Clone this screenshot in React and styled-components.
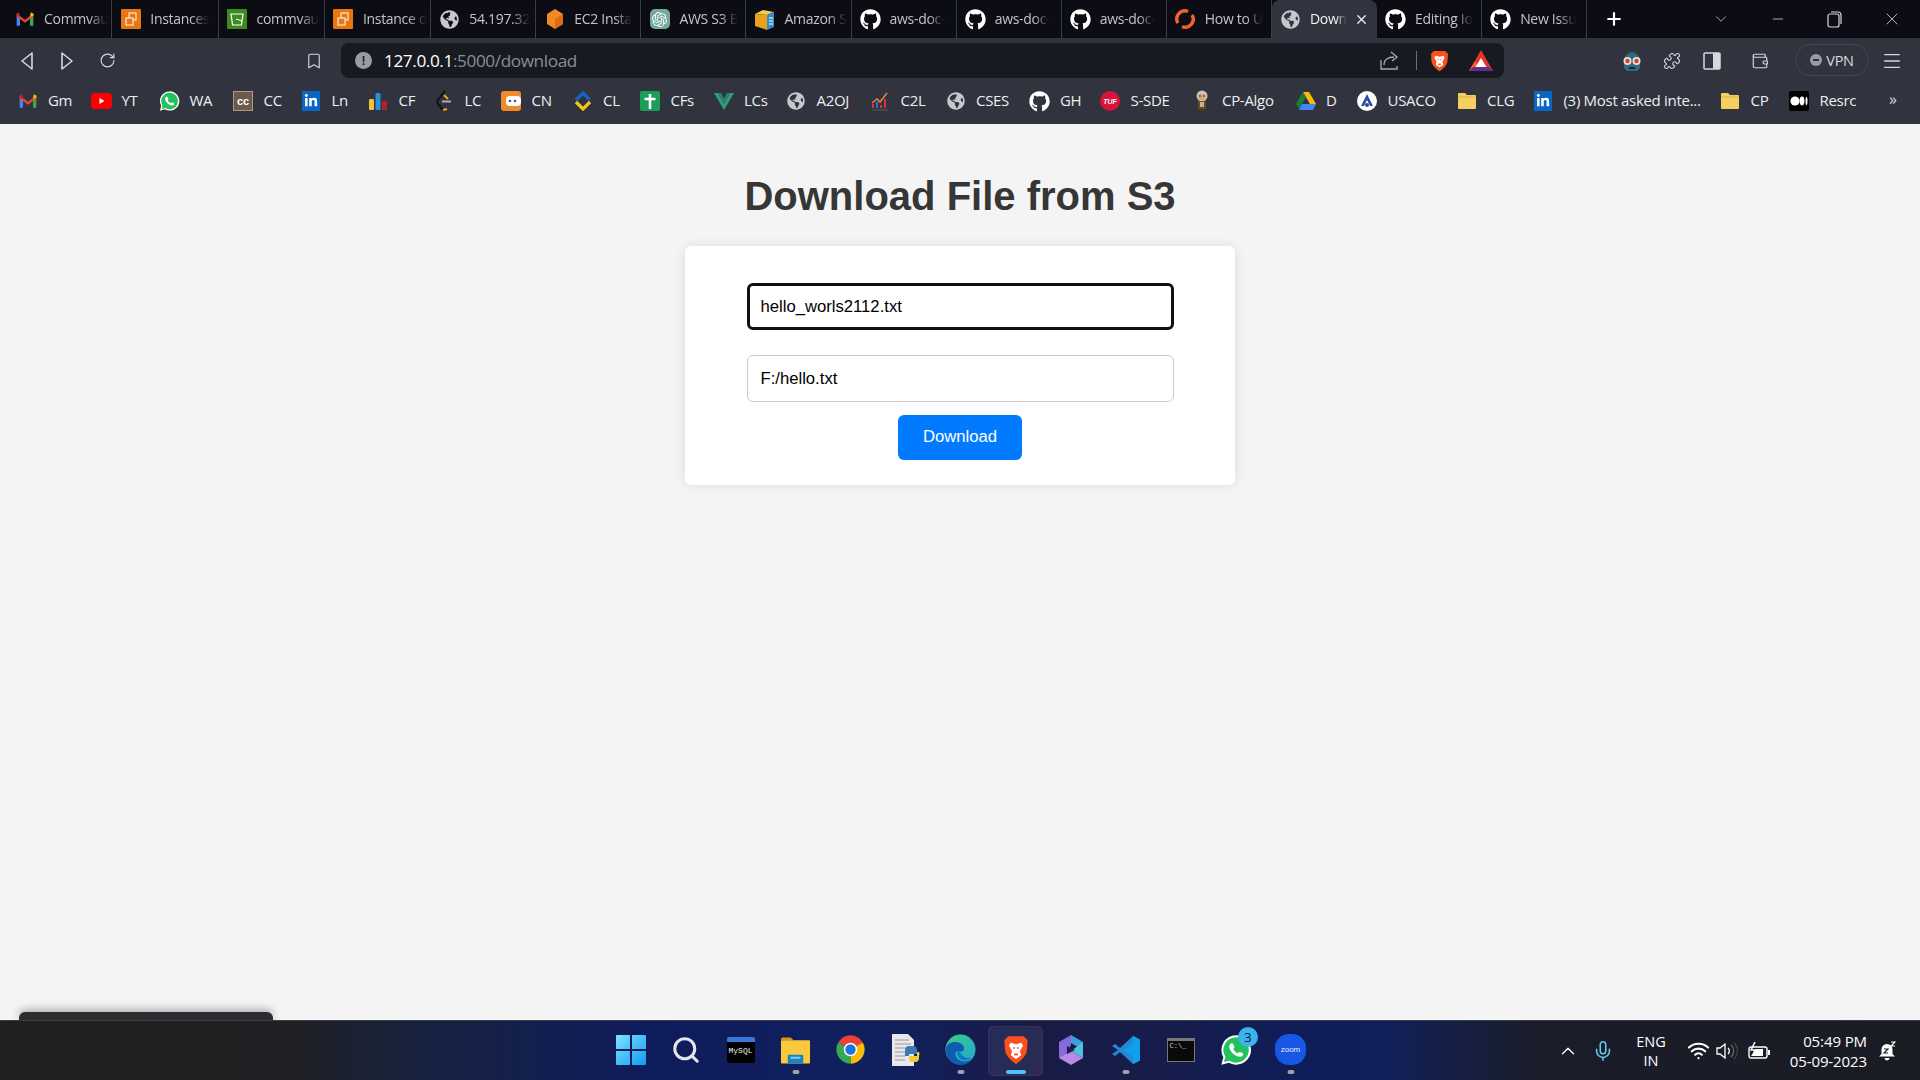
import React from 'react';
import styled, { createGlobalStyle } from 'styled-components';
import { FaGithub, FaLinkedinIn, FaGlobeAmericas } from 'react-icons/fa';
import { SiOpenai } from 'react-icons/si';
import { RotateCw, Bookmark, Puzzle, Wallet, Menu, X, Plus, Minus, ChevronDown, ChevronUp, Mic, Wifi, Search } from 'lucide-react';

const GlobalStyle = createGlobalStyle`
	html, body { margin: 0; padding: 0; height: 100%; overflow: hidden; }
	body { background: #f4f4f4; font-family: 'Liberation Sans', Arial, sans-serif; }
	#root { height: 100%; }
`;

const Screen = styled.div`
	position: relative;
	width: 1920px;
	height: 1080px;
	display: flex;
	flex-direction: column;
	overflow: hidden;
`;

/* ---------- icons ---------- */

const GmailIcon = ({ s = 20 }) => (
	<svg width={s} height={s} viewBox="0 0 24 24">
		<path d="M2 6v14h4V10z" fill="#4285f4" />
		<path d="M22 6v14h-4V10z" fill="#34a853" />
		<path d="M2 5.5 12 13l10-7.5V9L12 16.500 2 9z" fill="#ea4335" />
		<path d="M2 5.500 5 4l1 5.500L2 8z" fill="#c5221f" />
		<path d="M22 5.500 19 4l-1 5.500L22 8z" fill="#fbbc04" />
	</svg>
);
const AwsTile = ({ bg = '#e8770f' }) => (
	<svg width="20" height="20" viewBox="0 0 20 20">
		<rect width="20" height="20" rx="1" fill={bg} />
		<rect x="8" y="4" width="7" height="7" fill="none" stroke="#fff" strokeWidth="1" />
		<rect x="5" y="9" width="7" height="7" fill={bg} stroke="#fff" strokeWidth="1" />
	</svg>
);
const BucketTile = () => (
	<svg width="20" height="20" viewBox="0 0 20 20">
		<rect width="20" height="20" rx="1" fill="#3f8a1f" />
		<path d="M4 5h12l-1.600 11H5.600z" fill="none" stroke="#fff" strokeWidth="1.200" />
		<path d="M9 10l6 2" stroke="#fff" strokeWidth="1" />
	</svg>
);
const CubeIcon = () => (
	<svg width="20" height="22" viewBox="0 0 20 22">
		<path d="M10 1 18 6v10l-8 5-8-5V6z" fill="#f08a24" />
		<path d="M10 11v10l8-5V6z" fill="#e06c12" />
	</svg>
);
const GptTile = () => (
	<Tile $bg="#74aa9c" $r={5}><SiOpenai size={15} color="#fff" /></Tile>
);
const AmazonBox = () => (
	<svg width="21" height="21" viewBox="0 0 21 21">
		<path d="M1 5 9 1l11 2-7 3z" fill="#f7c948" />
		<path d="M1 5l12 1v15L1 17z" fill="#e8a21d" />
		<path d="M13 6l7-3v15l-7 3z" fill="#2f8fc9" />
		<path d="M15 9h4M15 12h4M15 15h4" stroke="#fff" strokeWidth="1.200" />
	</svg>
);
const SyncIcon = () => (
	<svg width="20" height="20" viewBox="0 0 20 20" fill="none" stroke="#f4602a" strokeWidth="3.400">
		<path d="M3 14A8 8 0 0 1 13 2.500" />
		<path d="M17 6a8 8 0 0 1-10 11.500" />
	</svg>
);
const Globe = ({ s = 19 }) => <FaGlobeAmericas size={s} color="#c6c8cd" />;
const Hub = () => <FaGithub size={21} color="#fff" />;
const YtIcon = () => (
	<svg width="21" height="16" viewBox="0 0 21 16">
		<rect width="21" height="16" rx="4" fill="#f00" />
		<path d="M8.500 5v6l5-3z" fill="#fff" />
	</svg>
);
const WaIcon = ({ s = 22 }) => (
	<svg width={s} height={s} viewBox="0 0 24 24">
		<path d="M12 1a11 11 0 0 0-9.500 16.500L1 23l5.700-1.500A11 11 0 1 0 12 1z" fill="#fff" />
		<path d="M12 2.500a9.500 9.500 0 0 0-8 14.500l-1 4 4-1a9.500 9.500 0 1 0 5-17.500z" fill="#25c15f" />
		<path d="M8.500 7c-.5 0-1.500 1-1.500 2.500 0 3 4 7.500 8 7.500 1.500 0 2.500-1 2.500-2 0-.5-2.500-1.800-3-1.500l-1 1c-1.500-.5-3-2-3.500-3.500l.8-1c.2-.6-1-3-1.800-3z" fill="#fff" />
	</svg>
);
const CcTile = styled.span`
	width: 20px;
	height: 20px;
	background: #6e5a48;
	border: 1px solid #a89a8c;
	box-sizing: border-box;
	color: #fff;
	font: bold 11px 'Liberation Sans', sans-serif;
	display: flex;
	align-items: center;
	justify-content: center;
`;
const Tile = styled.span`
	width: ${p => p.$w || 20}px;
	height: ${p => p.$h || 20}px;
	border-radius: ${p => p.$r || 0}px;
	background: ${p => p.$bg};
	color: #fff;
	display: flex;
	align-items: center;
	justify-content: center;
	flex: none;
`;
const LinkedIn = () => <Tile $w={18} $h={20} $bg="#0a66c2"><FaLinkedinIn size={14} /></Tile>;
const BarsIcon = () => (
	<svg width="20" height="20" viewBox="0 0 20 20">
		<rect x="1" y="8" width="5" height="11" rx="1" fill="#f5c33b" />
		<rect x="7.500" y="2" width="5" height="17" rx="1" fill="#2a8fd6" />
		<rect x="14" y="10" width="5" height="9" rx="1" fill="#b3202a" />
	</svg>
);
const LeetIcon = () => (
	<svg width="18" height="22" viewBox="0 0 18 22" fill="none" strokeWidth="2">
		<path d="M10 1 3 10c-1 1.500-1 3 0 4l5 6" stroke="#111" />
		<path d="M8 20l4-1" stroke="#f89f1b" />
		<path d="M7 11.500h9" stroke="#b0b0b0" />
		<path d="M9 5l4 4" stroke="#f89f1b" />
	</svg>
);
const NinjasIcon = () => (
	<Tile $bg="#f08a2c" $r={3}>
		<svg width="20" height="20" viewBox="0 0 20 20">
			<rect x="5" y="5" width="15" height="10" rx="4" fill="#fff" />
			<circle cx="9" cy="10" r="1.300" fill="#555" />
			<circle cx="14" cy="10" r="1.300" fill="#555" />
		</svg>
	</Tile>
);
const ChevronsIcon = () => (
	<svg width="20" height="22" viewBox="0 0 20 22" fill="none" strokeWidth="3.200">
		<path d="M3 10l7-7 7 7" stroke="#1565c0" />
		<path d="M3 12l7 7 7-7" stroke="#f5c518" />
	</svg>
);
const CrossTile = () => (
	<Tile $bg="#1b9e5a" $r={2}>
		<svg width="14" height="16" viewBox="0 0 14 16"><path d="M1.500 6h11M7 1v15" stroke="#fff" strokeWidth="2.600" /></svg>
	</Tile>
);
const VueIcon = () => (
	<svg width="20" height="20" viewBox="0 0 20 20">
		<path d="M0 2h4l6 11 6-11h4L10 19z" fill="#2f9e78" />
		<path d="M4 2h3l3 5.500L13 2h3l-6 11z" fill="#2f7f6d" />
	</svg>
);
const ChartIcon = () => (
	<svg width="20" height="22" viewBox="0 0 20 22" fill="none">
		<path d="M2 20h16" stroke="#556" />
		<path d="M3 18v-4M11 18v-3M15 18V9" stroke="#d33" strokeWidth="2" />
		<path d="M2 13l5-4 3 3 7-9" stroke="#e8833a" strokeWidth="1.500" />
		<path d="M7 18v-6" stroke="#27c" strokeWidth="2" />
	</svg>
);
const TufText = styled.span`
	font: italic bold 7px 'Liberation Sans', sans-serif;
	color: #fff;
`;
const TufIcon = () => (
	<Tile $bg="#d8143a" $r={10}><TufText>TUF</TufText></Tile>
);
const AlgoIcon = () => (
	<svg width="16" height="22" viewBox="0 0 16 22">
		<circle cx="8" cy="6" r="5.500" fill="#c9c4b8" />
		<rect x="4.500" y="4" width="7" height="6" fill="#d8a47f" />
		<rect x="5" y="5.500" width="2" height="1" fill="#333" />
		<rect x="9" y="5.500" width="2" height="1" fill="#333" />
		<rect x="4" y="11" width="8" height="8" fill="#6b4a2c" />
		<rect x="6" y="12" width="4" height="5" fill="#c9b48a" />
		<rect x="4" y="19" width="8" height="2" fill="#4a3520" />
	</svg>
);
const DriveIcon = () => (
	<svg width="20" height="18" viewBox="0 0 20 18">
		<path d="M7 0h6l7 12h-6z" fill="#fbbc04" />
		<path d="M7 0 0 12l3 5 7-12z" fill="#188038" />
		<path d="M3 18l3-6h14l-3 6z" fill="#4285f4" />
	</svg>
);
const UsacoIcon = () => (
	<svg width="20" height="20" viewBox="0 0 20 20">
		<circle cx="10" cy="10" r="10" fill="#fff" />
		<path d="M10 3 4 15h3l3-6 3 6h3z" fill="#2b4c9b" />
		<circle cx="10" cy="14" r="2" fill="#2b4c9b" />
	</svg>
);
const FolderIcon = () => (
	<svg width="20" height="18" viewBox="0 0 20 18">
		<path d="M1 2a1 1 0 0 1 1-1h6l2 2h8a1 1 0 0 1 1 1v12a1 1 0 0 1-1 1H2a1 1 0 0 1-1-1z" fill="#f5cf5f" />
		<path d="M1 5h18" stroke="#e3b23c" />
	</svg>
);
const MediumIcon = () => (
	<Tile $bg="#000" $r={2}>
		<svg width="18" height="10" viewBox="0 0 18 10">
			<circle cx="5" cy="5" r="4.600" fill="#fff" />
			<ellipse cx="12" cy="5" rx="2.400" ry="4.400" fill="#fff" />
			<ellipse cx="16.500" cy="5" rx="1" ry="4" fill="#fff" />
		</svg>
	</Tile>
);
const BraveIcon = ({ s = 20 }) => (
	<svg width={s} height={s * 1.15} viewBox="0 0 20 23">
		<path d="M4 1h12l3 3-.6 8c-.4 4-5 8-8.400 10.500C6.600 20 2 16 1.600 12L1 4z" fill="#f9501d" />
		<path d="M6 6l4 1.200L14 6l1.500 2-2.500 4.500 1 3-4 3-4-3 1-3L4.500 8z" fill="#fff" />
		<path d="M8 10h1M11 10h1" stroke="#f9501d" strokeWidth="1.400" />
		<path d="M8.500 15h3" stroke="#f9501d" strokeWidth="1.400" />
	</svg>
);
const BatIcon = () => (
	<svg width="24" height="22" viewBox="0 0 24 22">
		<path d="M12 0 24 21H0z" fill="#e8332a" />
		<path d="M0 21 6 11l6 10z" fill="#f0642a" />
		<path d="M24 21H0l4-4h16z" fill="#662d91" />
		<path d="M12 8l5.500 9h-11z" fill="#fff" />
	</svg>
);
const ShareIcon = () => (
	<svg width="19" height="19" viewBox="0 0 19 19" fill="none" stroke="#a7a9ae" strokeWidth="1.300">
		<path d="M1 9v9h16v-3" />
		<path d="M4 14c0-5 4-8 10-8" />
		<path d="M11 1l6 5-5 4" />
	</svg>
);
const RestoreIcon = () => (
	<svg width="15" height="17" viewBox="0 0 15 17" fill="none" stroke="#d6d8dc" strokeWidth="1.200">
		<rect x="1" y="3" width="11" height="13" rx="2" />
		<path d="M4 1h7a3 3 0 0 1 3 3v9" />
	</svg>
);
const PanelIcon = () => (
	<svg width="18" height="18" viewBox="0 0 18 18">
		<rect x="1" y="1" width="16" height="16" rx="1" fill="none" stroke="#d6d8dc" strokeWidth="1.500" />
		<rect x="10" y="1" width="7" height="16" fill="#d6d8dc" />
	</svg>
);
const SkullIcon = () => (
	<svg width="22" height="24" viewBox="0 0 22 24">
		<path d="M3 12a8 9 0 0 1 16 0v7l-3 3H6l-3-3z" fill="#2f6b7a" />
		<circle cx="6.500" cy="12" r="4" fill="#e8e2d6" />
		<circle cx="15.500" cy="12" r="4" fill="#e8e2d6" />
		<circle cx="6.500" cy="12" r="2.200" fill="#d8402a" />
		<circle cx="15.500" cy="12" r="2.200" fill="#d8402a" />
		<path d="M8 19h6" stroke="#1c2a30" strokeWidth="2" />
	</svg>
);
const NavArrow = styled.svg`
	transform: ${p => (p.$flip ? 'scaleX(-1)' : 'none')};
`;
const BackIcon = ({ flip }) => (
	<NavArrow $flip={flip} width="14" height="20" viewBox="0 0 14 20">
		<path d="M12 2 2 10l10 8z" fill="none" stroke="#d6d8dc" strokeWidth="1.600" strokeLinejoin="round" />
	</NavArrow>
);

/* taskbar icons */
const StartIcon = () => (
	<svg width="30" height="30" viewBox="0 0 30 30">
		<defs>
			<linearGradient id="st" x1="0" y1="0" x2="1" y2="1">
				<stop offset="0" stopColor="#7fe3ff" />
				<stop offset="1" stopColor="#0f9bf0" />
			</linearGradient>
		</defs>
		<path d="M0 1a1 1 0 0 1 1-1h13v14H0zM16 0h13a1 1 0 0 1 1 1v13H16zM0 16h14v14H1a1 1 0 0 1-1-1zM16 16h14v13a1 1 0 0 1-1 1H16z" fill="url(#st)" />
	</svg>
);
const MySqlTile = styled.span`
	width: 28px;
	height: 26px;
	box-sizing: border-box;
	background: #000;
	border-top: 5px solid #3a78d8;
	border-radius: 2px;
	color: #f0f0f0;
	font: 8px 'Liberation Mono', monospace;
	display: flex;
	align-items: flex-start;
	justify-content: center;
	padding-top: 4px;
`;
const FilesIcon = () => (
	<svg width="31" height="28" viewBox="0 0 32 28">
		<path d="M1 3a2 2 0 0 1 2-2h8l3 3H1z" fill="#d99a0c" />
		<rect x="1" y="4" width="30" height="24" rx="1" fill="#fcc83c" />
		<rect x="8" y="19" width="16" height="9" rx="1" fill="#1a83c8" />
		<rect x="11" y="21" width="10" height="2" fill="#7fd0f5" />
	</svg>
);
const ChromeIcon = () => (
	<svg width="31" height="31" viewBox="0 0 48 48">
		<path d="M24 24 5 13A22 22 0 0 1 43 13z" fill="#ea4335" />
		<path d="M24 24 43 13A22 22 0 0 1 24 46z" fill="#fbbc04" />
		<path d="M24 24V46A22 22 0 0 1 5 13z" fill="#34a853" />
		<circle cx="24" cy="24" r="10.500" fill="#fff" />
		<circle cx="24" cy="24" r="8" fill="#1a73e8" />
	</svg>
);
const PyFileIcon = () => (
	<svg width="30" height="32" viewBox="0 0 30 32">
		<path d="M1 0h16l6 6v26H1z" fill="#e8e8ea" />
		<path d="M4 6h14M4 10h16M4 14h10M4 18h10M4 22h10M4 26h10" stroke="#9a9aa0" strokeWidth="1" />
		<path d="M14 16a4 4 0 0 1 4-4h4a4 4 0 0 1 4 4v4H18v2h-4z" fill="#3b7bb3" />
		<path d="M28 18a4 4 0 0 1 0 4v2a4 4 0 0 1-4 4h-4a4 4 0 0 1-2-3v-3h8v-4z" fill="#f5c838" />
	</svg>
);
const EdgeIcon = () => (
	<svg width="31" height="31" viewBox="0 0 32 32">
		<defs>
			<linearGradient id="ed" x1="0" y1="0" x2="1" y2="1">
				<stop offset="0" stopColor="#3bd17c" />
				<stop offset="1" stopColor="#1fa5d8" />
			</linearGradient>
		</defs>
		<circle cx="16" cy="16" r="15.500" fill="url(#ed)" />
		<path d="M1 16C1 9 9 7 15 9c5 2 6 7 3 9h-6c-3 3 0 9 6 10 3 .5 7 0 10-2-3 4-7 6-12 6C7 32 1 25 1 16z" fill="#0f5cb0" />
		<path d="M14 17c-3 3-1 9 5 10 3 0 6-.5 9-2-5 .5-9-1-11-4-1-1.500-2-3-3-4z" fill="#1177c8" />
	</svg>
);
const CopilotIcon = () => (
	<svg width="26" height="32" viewBox="0 0 26 32">
		<path d="M13 1 25 8v8L13 9z" fill="#3aa0dc" />
		<path d="M1 8 13 1v10L7 22l-6 2z" fill="#8a6ad8" />
		<path d="M1 24l12 7 12-7-12-7z" fill="#b78ae8" />
		<path d="M25 8v16l-12-7z" fill="#4cc3d8" />
		<path d="M9 12l8 4-8 4z" fill="#1a2050" />
	</svg>
);
const VsCodeIcon = () => (
	<svg width="30" height="30" viewBox="0 0 30 30">
		<path d="M22 1 29 4.500v21L22 29 9 17l-5 4-3-2 6-4-6-4 3-2 5 4z" fill="#2189d6" />
		<path d="M22 1 29 4.500v21L22 29 22 8l-9 7 9 7z" fill="#0fa0ea" />
	</svg>
);
const TermTile = styled.span`
	width: 28px;
	height: 24px;
	box-sizing: border-box;
	background: #0a0a0a;
	border: 1px solid #777;
	border-top-width: 3px;
	color: #ccc;
	font: 7px 'Liberation Mono', monospace;
	padding: 1px 2px;
`;
const ZoomText = styled.span`
	font: 8px 'Liberation Sans', sans-serif;
	color: #e8efff;
`;
const ZoomIcon = () => (
	<Tile $w={31} $h={31} $r={14} $bg="#1757e4"><ZoomText>zoom</ZoomText></Tile>
);
const BatteryIcon = () => (
	<svg width="22" height="18" viewBox="0 0 22 18" fill="none">
		<rect x="1" y="5" width="18" height="11" rx="2" stroke="#fff" strokeWidth="1.400" />
		<path d="M3 14 8 7h7v7z" fill="#fff" />
		<rect x="20" y="8" width="2" height="5" fill="#fff" />
		<path d="M7 0 3 8h4l-2 5" stroke="#fff" strokeWidth="1.500" />
	</svg>
);
const VolumeIcon = () => (
	<svg width="22" height="20" viewBox="0 0 22 20" fill="none" stroke="#fff" strokeWidth="1.300">
		<path d="M1 7h3l5-4v14l-5-4H1z" />
		<path d="M12 7a4 4 0 0 1 0 6" />
		<path d="M15 4a8 8 0 0 1 0 12" stroke="#666" />
		<path d="M18 2a11 11 0 0 1 0 16" stroke="#444" />
	</svg>
);
const BellIcon = () => (
	<svg width="18" height="20" viewBox="0 0 18 20">
		<path d="M9 3a5.500 5.500 0 0 0-5.500 5.500V13L1 15.500h16L14.500 13V8.500A5.500 5.500 0 0 0 9 3z" fill="#fff" />
		<path d="M6.500 17a2.500 2.500 0 0 0 5 0z" fill="#fff" />
		<path d="M6 8h4l-4 4h4" fill="none" stroke="#222" strokeWidth="1.200" />
		<path d="M13 1h4l-4 4h4" fill="none" stroke="#fff" strokeWidth="1.200" />
	</svg>
);

/* ---------- tab strip ---------- */

const TabStrip = styled.div`
	height: 38px;
	background: #0c0c14;
	display: flex;
	align-items: stretch;
	padding-left: 6px;
	flex: none;
	font-family: 'Open Sans', 'Noto Sans', sans-serif;
`;
const Tab = styled.div`
	flex: 0 0 ${p => p.$w}px;
	box-sizing: border-box;
	display: flex;
	align-items: center;
	padding-left: 8px;
	background: ${p => (p.$active ? '#31343f' : 'transparent')};
	border-radius: ${p => (p.$active ? '8px 8px 0 0' : '0')};
	border-right: ${p => (p.$active ? 'none' : '1px solid #3a3c46')};
`;
const TabIcon = styled.span`
	width: 21px;
	flex: none;
	margin-right: 9px;
	display: flex;
	justify-content: center;
`;
const TabTitle = styled.span`
	font-size: 14px;
	letter-spacing: -0.300px;
	padding-bottom: 2px;
	color: ${p => (p.$active ? '#f2f3f5' : '#c2c4ca')};
	white-space: nowrap;
	-webkit-mask-image: linear-gradient(to right, #000 70%, transparent);
	mask-image: linear-gradient(to right, #000 70%, transparent);
`;
const TabClose = styled.span`
	display: flex;
	margin-left: auto;
	margin-right: 8px;
	color: #f2f3f5;
`;
const NewTab = styled.div`
	margin-left: 15px;
	width: 24px;
	color: #fff;
	display: flex;
	align-items: center;
	justify-content: center;
`;
const WindowControls = styled.div`
	margin-left: auto;
	display: flex;
	color: #d6d8dc;
`;
const WindowButton = styled.div`
	width: 57px;
	display: flex;
	align-items: center;
	justify-content: center;
`;

const tabs = [
	[<GmailIcon />, 'Commvau'],
	[<AwsTile />, 'Instances'],
	[<BucketTile />, 'commvau'],
	[<AwsTile />, 'Instance d'],
	[<Globe />, '54.197.32'],
	[<CubeIcon />, 'EC2 Insta'],
	[<GptTile />, 'AWS S3 B'],
	[<AmazonBox />, 'Amazon S'],
	[<Hub />, 'aws-doc-'],
	[<Hub />, 'aws-doc-'],
	[<Hub />, 'aws-doc-'],
	[<SyncIcon />, 'How to U'],
	[<Globe />, 'Down', true],
	[<Hub />, 'Editing Io'],
	[<Hub />, 'New Issu'],
];

/* ---------- toolbar ---------- */

const Toolbar = styled.div`
	height: 40px;
	background: #31343f;
	display: flex;
	align-items: flex-end;
	padding-left: 7px;
	flex: none;
	color: #d6d8dc;
`;
const ToolButton = styled.div`
	width: 40px;
	height: 35px;
	margin-left: ${p => p.$ml || 0}px;
	flex: none;
	display: flex;
	align-items: center;
	justify-content: center;
`;
const AddressBar = styled.div`
	width: 1163px;
	height: 35px;
	margin-left: 7px;
	box-sizing: border-box;
	background: #181a21;
	border-radius: 8px;
	display: flex;
	align-items: center;
	padding-left: 14px;
	flex: none;
`;
const InfoDot = styled.span`
	width: 17px;
	height: 17px;
	border-radius: 50%;
	background: #9a9ca3;
	color: #181a21;
	font: bold 12px 'Liberation Sans', sans-serif;
	display: flex;
	align-items: center;
	justify-content: center;
	flex: none;
`;
const Url = styled.span`
	margin-left: 12px;
	font: 17.200px 'Open Sans', 'Noto Sans', sans-serif;
	letter-spacing: -0.400px;
	color: #8b8d94;
	b {
		font-weight: 400;
		color: #fff;
	}
`;
const AddressActions = styled.div`
	margin-left: auto;
	display: flex;
	align-items: center;
	padding-right: 11px;
`;
const ShareBox = styled.span`
	display: flex;
	margin-right: 17px;
`;
const Divider = styled.span`
	width: 1px;
	height: 19px;
	background: #6c6e75;
	margin-right: 13px;
`;
const BraveSlot = styled.span`
	display: flex;
	margin-right: 20px;
`;
const VpnPill = styled.div`
	width: 74px;
	height: 32px;
	margin-left: 15px;
	margin-bottom: 2px;
	box-sizing: border-box;
	border: 1px solid #454854;
	border-radius: 16px;
	display: flex;
	align-items: center;
	justify-content: center;
	gap: 4px;
	color: #d6d8dc;
	font: 14.500px 'Open Sans', 'Noto Sans', sans-serif;
	letter-spacing: -0.300px;
	flex: none;
`;
const VpnDot = styled.span`
	width: 12px;
	height: 12px;
	border-radius: 50%;
	background: #9a9ca3;
	display: flex;
	align-items: center;
	justify-content: center;
	&::after {
		content: '';
		width: 6px;
		height: 2px;
		background: #31343f;
	}
`;

/* ---------- bookmarks ---------- */

const BookmarkBar = styled.div`
	height: 46px;
	background: #31343f;
	display: flex;
	align-items: center;
	padding-left: 17px;
	flex: none;
	position: relative;
`;
const BookmarkItem = styled.div`
	flex: 0 0 ${p => p.$w}px;
	display: flex;
	align-items: center;
	min-width: 0;
`;
const BookmarkIcon = styled.span`
	width: 21px;
	margin-right: 10px;
	display: flex;
	justify-content: center;
	flex: none;
`;
const BookmarkLabel = styled.span`
	font: 15px 'Open Sans', 'Noto Sans', sans-serif;
	letter-spacing: -0.300px;
	padding-bottom: 2px;
	color: #eceef0;
	white-space: nowrap;
`;
const MoreChevron = styled.span`
	position: absolute;
	right: 23px;
	top: 10px;
	color: #d6d8dc;
	font: 16px 'Open Sans', sans-serif;
`;

const bookmarks = [
	[<GmailIcon />, 'Gm', 73.500],
	[<YtIcon />, 'YT', 68],
	[<WaIcon />, 'WA', 74],
	[<CcTile>cc</CcTile>, 'CC', 68],
	[<LinkedIn />, 'Ln', 67],
	[<BarsIcon />, 'CF', 66],
	[<LeetIcon />, 'LC', 67],
	[<NinjasIcon />, 'CN', 71.500],
	[<ChevronsIcon />, 'CL', 67.500],
	[<CrossTile />, 'CFs', 73.500],
	[<VueIcon />, 'LCs', 72.500],
	[<Globe s={18} />, 'A2OJ', 84],
	[<ChartIcon />, 'C2L', 75.500],
	[<Globe s={18} />, 'CSES', 84],
	[<Hub />, 'GH', 70.500],
	[<TufIcon />, 'S-SDE', 91.500],
	[<AlgoIcon />, 'CP-Algo', 104],
	[<DriveIcon />, 'D', 61.500],
	[<UsacoIcon />, 'USACO', 99.500],
	[<FolderIcon />, 'CLG', 76.500],
	[<LinkedIn />, '(3) Most asked inte...', 187],
	[<FolderIcon />, 'CP', 69],
	[<MediumIcon />, 'Resrc', 80],
];

/* ---------- page ---------- */

const Main = styled.main`
	flex: 1;
	background: #f4f4f4;
	display: flex;
	flex-direction: column;
	align-items: center;
	padding-top: 49px;
	box-sizing: border-box;
	min-height: 0;
`;
const Title = styled.h1`
	margin: 0 0 27px;
	font-size: 40px;
	line-height: 46px;
	font-weight: bold;
	color: #363636;
`;
const Card = styled.form`
	width: 550px;
	height: 239px;
	box-sizing: border-box;
	background: #fff;
	border-radius: 6px;
	box-shadow: 0 0 12px rgba(0, 0, 0, 0.1);
	padding: 37px 62px 25px;
	display: flex;
	flex-direction: column;
	align-items: center;
`;
const Field = styled.input`
	width: 427px;
	height: 47px;
	flex: none;
	box-sizing: border-box;
	margin-bottom: ${p => p.$mb}px;
	padding: 0 ${p => (p.$focused ? 11 : 13)}px;
	border: ${p => (p.$focused ? '3px solid #101010' : '1px solid #ccc')};
	border-radius: 6px;
	background: #fff;
	color: #000;
	font: 16.670px 'Liberation Sans', Arial, sans-serif;
	outline: none;
`;
const DownloadButton = styled.button`
	width: 124px;
	height: 45px;
	flex: none;
	border: none;
	border-radius: 6px;
	background: #007bff;
	color: #fff;
	font: 16.670px 'Liberation Sans', Arial, sans-serif;
	padding: 0 0 1px;
`;

/* ---------- taskbar ---------- */

const ToastEdge = styled.div`
	position: absolute;
	left: 19px;
	bottom: 60px;
	width: 254px;
	height: 8px;
	background: #2c2c2e;
	border-radius: 6px 6px 0 0;
	box-shadow: 0 -2px 8px rgba(0, 0, 0, 0.35);
`;
const Taskbar = styled.footer`
	height: 60px;
	flex: none;
	box-sizing: border-box;
	position: relative;
	border-top: 1px solid #3a3d48;
	background: linear-gradient(90deg, #202020 0%, #1f2023 15%, #172240 22%, #0f1c5c 34%, #10205e 46%, #191b45 54%, #171c4a 60%, #0f1d58 68%, #10205a 72%, #1a1d2a 80%, #1a1c24 100%);
	display: grid;
	grid-template-columns: 1fr auto 1fr;
	align-items: center;
`;
const Dock = styled.div`
	grid-column: 2;
	display: flex;
	align-items: center;
	padding-left: 1px;
`;
const DockItem = styled.div`
	position: relative;
	width: 55px;
	height: 50px;
	box-sizing: border-box;
	padding-bottom: 2px;
	display: flex;
	align-items: center;
	justify-content: center;
	border-radius: 5px;
	background: ${p => (p.$active ? 'rgba(255,255,255,0.07)' : 'transparent')};
	box-shadow: ${p => (p.$active ? 'inset 0 0 0 1px rgba(255,255,255,0.05)' : 'none')};
	&::after {
		content: '';
		display: ${p => (p.$dot || p.$active ? 'block' : 'none')};
		position: absolute;
		bottom: 2px;
		left: 50%;
		transform: translateX(-50%);
		width: ${p => (p.$active ? '20px' : '7px')};
		height: 4px;
		border-radius: 2px;
		background: ${p => (p.$active ? '#4cc2ff' : '#9ea1a8')};
	}
`;
const Badge = styled.span`
	position: absolute;
	top: 1px;
	right: 5px;
	width: 20px;
	height: 20px;
	border-radius: 50%;
	background: #39b4ee;
	color: #10203a;
	font: 13px 'Open Sans', sans-serif;
	display: flex;
	align-items: center;
	justify-content: center;
`;
const Tray = styled.div`
	grid-column: 3;
	justify-self: end;
	display: flex;
	align-items: center;
	color: #fff;
	height: 100%;
	font-family: 'Open Sans', 'Noto Sans', sans-serif;
`;
const TraySlot = styled.span`
	width: ${p => p.$w}px;
	display: flex;
	justify-content: center;
	flex: none;
`;
const Lang = styled.div`
	width: 44px;
	margin: 0 10px 0 9px;
	font-size: 14.500px;
	line-height: 19px;
	text-align: center;
`;
const Clock = styled.div`
	width: 90px;
	font-size: 15px;
	letter-spacing: -0.100px;
	line-height: 20px;
	text-align: right;
	white-space: nowrap;
`;
const BellSlot = styled.span`
	width: 53px;
	display: flex;
	justify-content: center;
	padding-right: 13px;
	box-sizing: border-box;
`;

export default function App() {
	return (
		<Screen>
			<GlobalStyle />
			<TabStrip>
				{tabs.map(([icon, title, active], i) => (
					<Tab key={i} $active={active} $w={i < 4 ? 106.3 : 105.1}>
						<TabIcon>{icon}</TabIcon>
						<TabTitle $active={active}>{title}</TabTitle>
						{active && <TabClose><X size={15} strokeWidth={2} /></TabClose>}
					</Tab>
				))}
				<NewTab><Plus size={20} strokeWidth={2.600} /></NewTab>
				<WindowControls>
					<WindowButton><ChevronDown size={18} strokeWidth={1} /></WindowButton>
					<WindowButton><Minus size={16} strokeWidth={1.200} /></WindowButton>
					<WindowButton><RestoreIcon /></WindowButton>
					<WindowButton><X size={20} strokeWidth={1} /></WindowButton>
				</WindowControls>
			</TabStrip>

			<Toolbar>
				<ToolButton><BackIcon /></ToolButton>
				<ToolButton><BackIcon flip /></ToolButton>
				<ToolButton><RotateCw size={17} strokeWidth={1.600} /></ToolButton>
				<ToolButton $ml={167}><Bookmark size={18} strokeWidth={1.500} /></ToolButton>
				<AddressBar>
					<InfoDot>!</InfoDot>
					<Url><b>127.0.0.1</b>:5000/download</Url>
					<AddressActions>
						<ShareBox><ShareIcon /></ShareBox>
						<Divider />
						<BraveSlot><BraveIcon s={19} /></BraveSlot>
						<BatIcon />
					</AddressActions>
				</AddressBar>
				<ToolButton $ml={108}><SkullIcon /></ToolButton>
				<ToolButton><Puzzle size={18} strokeWidth={1.500} /></ToolButton>
				<ToolButton><PanelIcon /></ToolButton>
				<ToolButton $ml={8}><Wallet size={18} strokeWidth={1.500} /></ToolButton>
				<VpnPill><VpnDot />VPN</VpnPill>
				<ToolButton $ml={3}><Menu size={22} strokeWidth={1.500} /></ToolButton>
			</Toolbar>

			<BookmarkBar>
				{bookmarks.map(([icon, label, w], i) => (
					<BookmarkItem key={i} $w={w}>
						<BookmarkIcon>{icon}</BookmarkIcon>
						<BookmarkLabel>{label}</BookmarkLabel>
					</BookmarkItem>
				))}
				<MoreChevron>»</MoreChevron>
			</BookmarkBar>

			<Main>
				<Title>Download File from S3</Title>
				<Card onSubmit={e => e.preventDefault()}>
					<Field $focused $mb={25} defaultValue="hello_worls2112.txt" />
					<Field $mb={13} defaultValue="F:/hello.txt" />
					<DownloadButton>Download</DownloadButton>
				</Card>
			</Main>

			<ToastEdge />
			<Taskbar>
				<Dock>
					<DockItem><StartIcon /></DockItem>
					<DockItem><Search size={30} strokeWidth={2.400} color="#e4e6ea" /></DockItem>
					<DockItem><MySqlTile>MySQL</MySqlTile></DockItem>
					<DockItem $dot><FilesIcon /></DockItem>
					<DockItem><ChromeIcon /></DockItem>
					<DockItem><PyFileIcon /></DockItem>
					<DockItem $dot><EdgeIcon /></DockItem>
					<DockItem $active><BraveIcon s={26} /></DockItem>
					<DockItem><CopilotIcon /></DockItem>
					<DockItem $dot><VsCodeIcon /></DockItem>
					<DockItem><TermTile>C:\_</TermTile></DockItem>
					<DockItem><WaIcon s={32} /><Badge>3</Badge></DockItem>
					<DockItem $dot><ZoomIcon /></DockItem>
				</Dock>
				<Tray>
					<TraySlot $w={36}><ChevronUp size={22} strokeWidth={1.400} /></TraySlot>
					<TraySlot $w={34}><Mic size={22} strokeWidth={1.700} color="#68c8e8" /></TraySlot>
					<Lang>ENG<br />IN</Lang>
					<TraySlot $w={30}><Wifi size={23} strokeWidth={2.200} /></TraySlot>
					<TraySlot $w={28}><VolumeIcon /></TraySlot>
					<TraySlot $w={36}><BatteryIcon /></TraySlot>
					<Clock>05:49 PM<br />05-09-2023</Clock>
					<BellSlot><BellIcon /></BellSlot>
				</Tray>
			</Taskbar>
		</Screen>
	);
}
